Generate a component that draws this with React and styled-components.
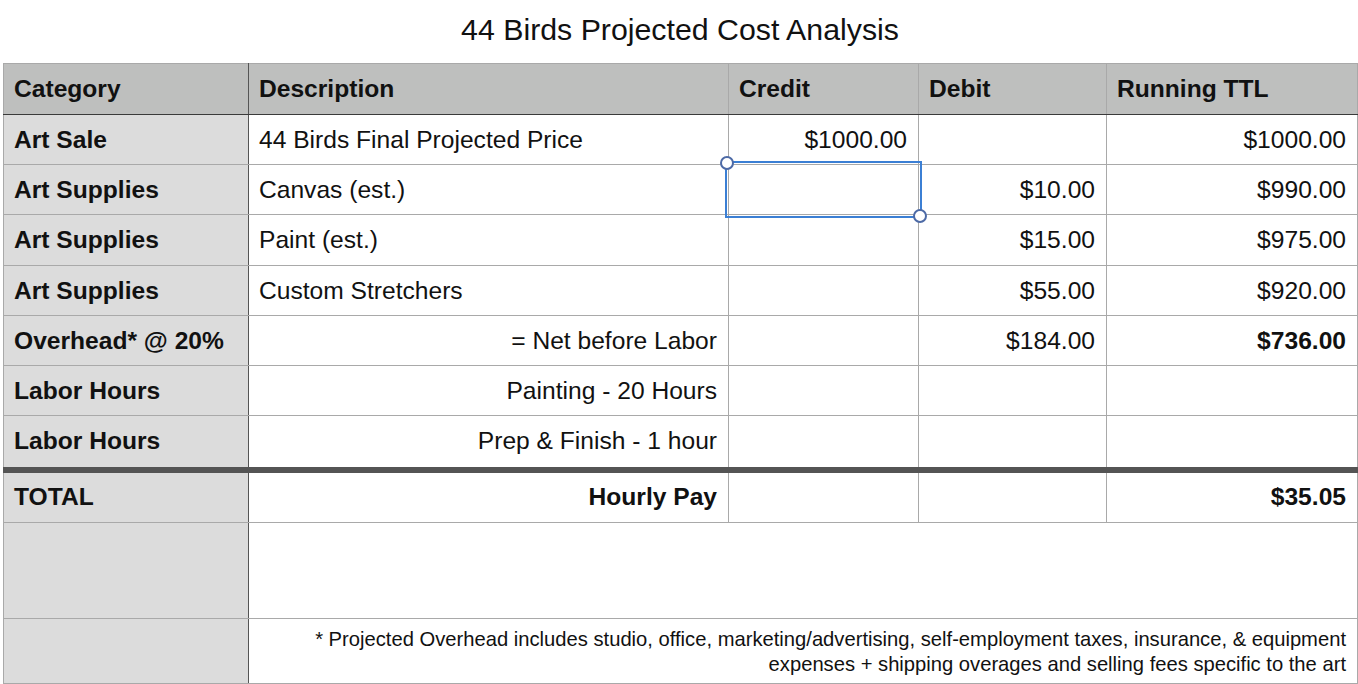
import React from 'react';
import styled, { createGlobalStyle } from 'styled-components';

const GlobalStyle = createGlobalStyle`
    body {
        margin: 0;
        background: #ffffff;
        font-family: "Liberation Sans", Arial, Helvetica, sans-serif;
        color: #111111;
    }
`;

const Page = styled.div`
    width: 1358px;
    padding: 0 1px 0 3px;
    box-sizing: border-box;
`;

const Title = styled.h1`
    margin: 0;
    height: 63px;
    display: flex;
    align-items: center;
    justify-content: center;
    font-size: 30.3px;
    font-weight: 400;
    padding-bottom: 4px;
    box-sizing: border-box;
`;

const Sheet = styled.table`
    width: 1354px;
    border-collapse: collapse;
    table-layout: fixed;
    font-size: 24.6px;
`;

const Cell = styled.td`
    height: ${p => p.$h || 50}px;
    padding: 0 11px 0 10px;
    border: 1px solid #a9a9a9;
    text-align: ${p => (p.$right ? 'right' : 'left')};
    font-weight: ${p => (p.$bold ? 700 : 400)};
    background: ${p => (p.$cat ? '#dcdcdc' : '#ffffff')};
    border-right-color: ${p => (p.$cat ? '#555555' : '#a9a9a9')};
    border-top: ${p => (p.$thick ? '6px solid #545454' : '1px solid #a9a9a9')};
    position: relative;
    white-space: nowrap;
    box-sizing: border-box;
`;

const HeadCell = styled.th`
    height: 51px;
    padding: 0 10px;
    text-align: left;
    font-weight: 700;
    background: #bebfbe;
    border: 1px solid #a9a9a9;
    border-bottom: 1px solid #3a3a3a;
    border-right-color: ${p => (p.$cat ? '#555555' : '#a9a9a9')};
    box-sizing: border-box;
`;

const Note = styled.div`
    font-size: 20.2px;
    line-height: 25px;
    text-align: right;
    white-space: normal;
    padding-top: 2px;
`;

const Selection = styled.div`
    position: absolute;
    z-index: 2;
    top: -4px;
    left: -4px;
    right: -4px;
    bottom: -4px;
    border: 2px solid #3b7fd4;
    pointer-events: none;
`;

const Handle = styled.span`
    position: absolute;
    width: 10px;
    height: 10px;
    border-radius: 50%;
    background: #ffffff;
    border: 2px solid #4d6aa6;
    ${p => (p.$start ? 'top: -7px; left: -7px;' : 'bottom: -7px; right: -7px;')}
`;

const rows = [
    { cat: 'Art Sale', desc: '44 Birds Final Projected Price', credit: '$1000.00', debit: '', total: '$1000.00', h: 50 },
    { cat: 'Art Supplies', desc: 'Canvas (est.)', credit: '', debit: '$10.00', total: '$990.00', selected: true, h: 50 },
    { cat: 'Art Supplies', desc: 'Paint (est.)', credit: '', debit: '$15.00', total: '$975.00', h: 51 },
    { cat: 'Art Supplies', desc: 'Custom Stretchers', credit: '', debit: '$55.00', total: '$920.00', h: 50 },
    { cat: 'Overhead* @ 20%', desc: '= Net before Labor', descRight: true, credit: '', debit: '$184.00', total: '$736.00', boldTotal: true, h: 50 },
    { cat: 'Labor Hours', desc: 'Painting - 20 Hours', descRight: true, credit: '', debit: '', total: '', h: 50 },
    { cat: 'Labor Hours', desc: 'Prep & Finish - 1 hour', descRight: true, credit: '', debit: '', total: '', h: 54 },
];

const App = () => {
    return (
        <Page>
            <GlobalStyle />
            <Title>44 Birds Projected Cost Analysis</Title>

            <Sheet>
                <colgroup>
                    <col style={{ width: 245 }} />
                    <col style={{ width: 480 }} />
                    <col style={{ width: 190 }} />
                    <col style={{ width: 188 }} />
                    <col style={{ width: 251 }} />
                </colgroup>
                <thead>
                    <tr>
                        <HeadCell $cat>Category</HeadCell>
                        <HeadCell>Description</HeadCell>
                        <HeadCell>Credit</HeadCell>
                        <HeadCell>Debit</HeadCell>
                        <HeadCell>Running TTL</HeadCell>
                    </tr>
                </thead>
                <tbody>
                    {rows.map((r, i) => (
                        <tr key={i}>
                            <Cell $cat $bold $h={r.h}>{r.cat}</Cell>
                            <Cell $right={r.descRight} $h={r.h}>{r.desc}</Cell>
                            <Cell $right $h={r.h}>
                                {r.credit}
                                {r.selected && (
                                    <Selection>
                                        <Handle $start />
                                        <Handle />
                                    </Selection>
                                )}
                            </Cell>
                            <Cell $right $h={r.h}>{r.debit}</Cell>
                            <Cell $right $bold={r.boldTotal} $h={r.h}>{r.total}</Cell>
                        </tr>
                    ))}

                    {/* total */}
                    <tr>
                        <Cell $cat $bold $thick $h={53}>TOTAL</Cell>
                        <Cell $right $bold $thick $h={53}>Hourly Pay</Cell>
                        <Cell $thick $h={53} />
                        <Cell $thick $h={53} />
                        <Cell $right $bold $thick $h={53}>$35.05</Cell>
                    </tr>

                    {/* spacer */}
                    <tr>
                        <Cell $cat $h={96} />
                        <Cell colSpan={4} $h={96} />
                    </tr>

                    {/* footnote */}
                    <tr>
                        <Cell $cat $h={65} />
                        <Cell colSpan={4} $h={65}>
                            <Note>
                                * Projected Overhead includes studio, office, marketing/advertising, self-employment taxes, insurance, &amp; equipment<br />
                                expenses + shipping overages and selling fees specific to the art
                            </Note>
                        </Cell>
                    </tr>
                </tbody>
            </Sheet>
        </Page>
    );
};

export default App;
